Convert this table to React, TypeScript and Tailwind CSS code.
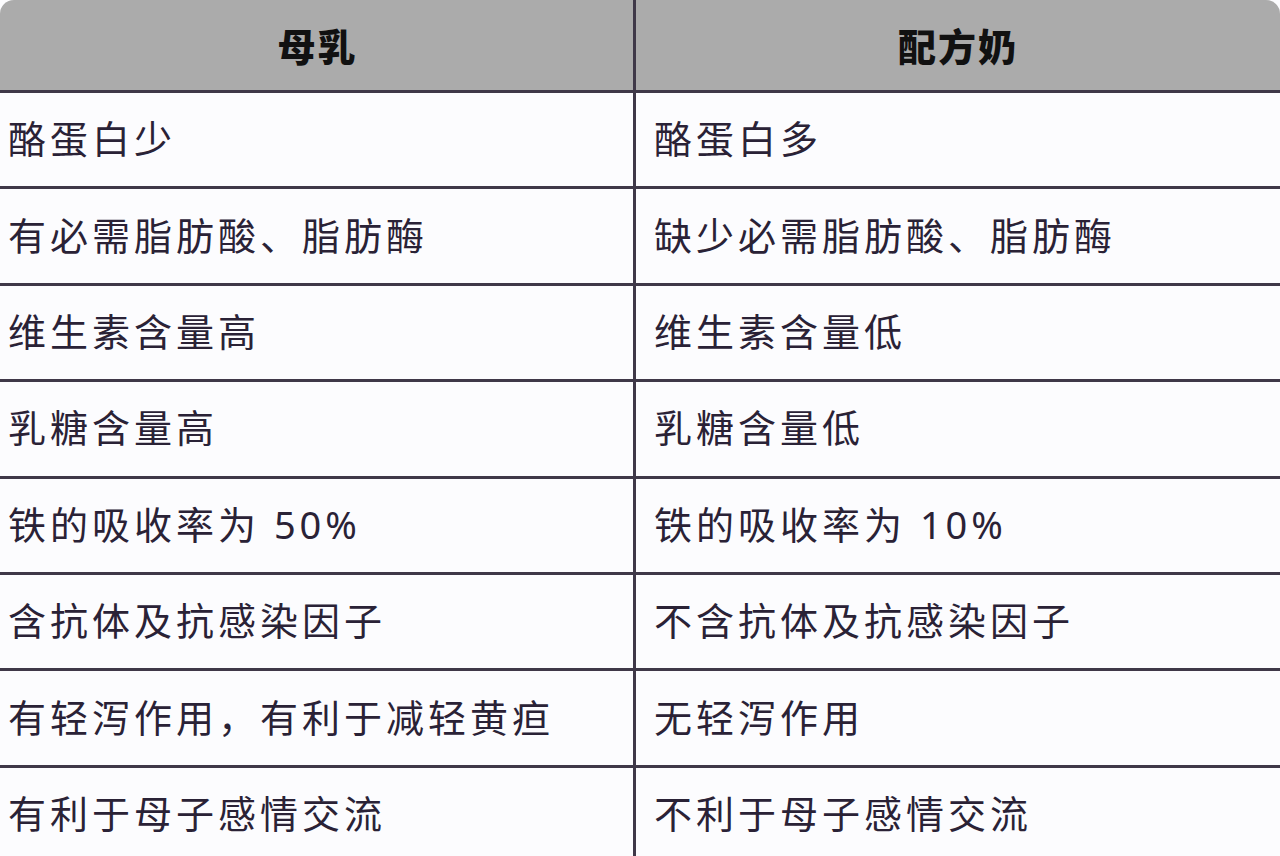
import React from "react";

const rows: [string, string][] = [
  ["酪蛋白少", "酪蛋白多"],
  ["有必需脂肪酸、脂肪酶", "缺少必需脂肪酸、脂肪酶"],
  ["维生素含量高", "维生素含量低"],
  ["乳糖含量高", "乳糖含量低"],
  ["铁的吸收率为 50%", "铁的吸收率为 10%"],
  ["含抗体及抗感染因子", "不含抗体及抗感染因子"],
  ["有轻泻作用，有利于减轻黄疸", "无轻泻作用"],
  ["有利于母子感情交流", "不利于母子感情交流"],
];

export default function App() {
  return (
    <div
      className="w-[1280px] h-[856px] overflow-hidden bg-[#fcfcfe]"
      style={{ fontFamily: '"Noto Sans", "Noto Sans CJK SC", sans-serif' }}
    >
      <div className="grid grid-cols-[636px_1fr] h-[93px] bg-[#ababab] rounded-t-[14px] border-b-[3px] border-[#3f3848]">
        <div className="flex items-center justify-center border-r-[3px] border-[#3f3848] text-[38px] font-black text-[#111] tracking-[2px] pl-[2px] pt-[2px]">
          母乳
        </div>
        <div className="flex items-center justify-center text-[38px] font-black text-[#111] tracking-[2px] pt-[2px]">
          配方奶
        </div>
      </div>
      {rows.map(([a, b], i) => (
        <div
          key={i}
          className="grid grid-cols-[636px_1fr] h-[96.4px] border-b-[3px] border-[#3f3848] text-[38px] text-[#2a2236] tracking-[4px]"
        >
          <div className="flex items-center pl-[8px] border-r-[3px] border-[#3f3848] pb-[2px]">{a}</div>
          <div className="flex items-center pl-[18px] pb-[2px]">{b}</div>
        </div>
      ))}
    </div>
  );
}
